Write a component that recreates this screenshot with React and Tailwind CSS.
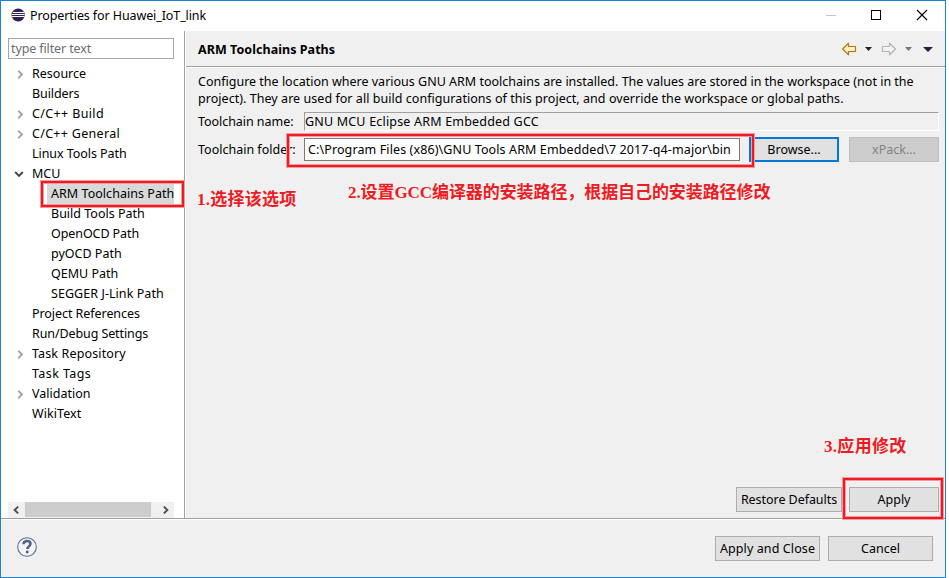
import React from 'react';

const TREE = [
  { label: 'Resource', arrow: 'right', sp: 'tracking-[0px]' },
  { label: 'Builders', sp: 'tracking-[-0.1px]' },
  { label: 'C/C++ Build', arrow: 'right', sp: 'tracking-[0.36px]' },
  { label: 'C/C++ General', arrow: 'right', sp: 'tracking-[0.3px]' },
  { label: 'Linux Tools Path', sp: 'tracking-[-0.06px]' },
  { label: 'MCU', arrow: 'down', sp: 'tracking-[0px]' },
  { label: 'ARM Toolchains Path', child: true, selected: true, sp: 'tracking-[0.04px]' },
  { label: 'Build Tools Path', child: true, sp: 'tracking-[0px]' },
  { label: 'OpenOCD Path', child: true, sp: 'tracking-[-0.08px]' },
  { label: 'pyOCD Path', child: true, sp: 'tracking-[0px]' },
  { label: 'QEMU Path', child: true, sp: 'tracking-[0px]' },
  { label: 'SEGGER J-Link Path', child: true, sp: 'tracking-[0.06px]' },
  { label: 'Project References', sp: 'tracking-[-0.06px]' },
  { label: 'Run/Debug Settings', sp: 'tracking-[-0.1px]' },
  { label: 'Task Repository', arrow: 'right', sp: 'tracking-[0.14px]' },
  { label: 'Task Tags', sp: 'tracking-[0.4px]' },
  { label: 'Validation', arrow: 'right', sp: 'tracking-[0px]' },
  { label: 'WikiText', sp: 'tracking-[0.06px]' },
];

function EclipseLogo() {
  return (
    <svg className="h-[14px] w-[14px]" viewBox="0 0 14 14">
      <circle cx="6.4" cy="7" r="6.3" fill="#f0a040" />
      <circle cx="7.3" cy="7" r="6.5" fill="#2c2255" />
      <path d="M2 4.500h11M1 6.500h12.500M1 8.500h12.500" stroke="#fff" strokeWidth="1" />
    </svg>
  );
}

function TreeArrow({ dir }) {
  if (dir === 'right') {
    return (
      <svg className="ml-[16px] h-[9px] w-[7px]" viewBox="0 0 7 9">
        <path d="M1.2 0.8L5 4.5L1.2 8.2" fill="none" stroke="#a6a6a6" strokeWidth="1.9" />
      </svg>
    );
  }
  if (dir === 'down') {
    return (
      <svg className="ml-[13px] h-[7px] w-[10px]" viewBox="0 0 10 7">
        <path d="M1.2 1L5 4.800L8.800 1" fill="none" stroke="#404040" strokeWidth="1.9" />
      </svg>
    );
  }
  return null;
}

function TreeRow({ item }) {
  if (item.child) {
    return (
      <div className="flex h-5 pl-[46px]">
        <div
          className={
            'flex h-5 w-[127px] items-center whitespace-nowrap pl-[4px] ' +
            (item.selected ? 'bg-[#d9d9d9]' : '')
          }
        >
          <span className={'pb-[2px] ' + item.sp}>{item.label}</span>
        </div>
      </div>
    );
  }
  return (
    <div className="flex h-5 items-center">
      <div className="flex w-[31px] shrink-0 items-center">
        <TreeArrow dir={item.arrow} />
      </div>
      <span className={'whitespace-nowrap pb-[2px] ' + item.sp}>{item.label}</span>
    </div>
  );
}

function Button({ className, children }) {
  return (
    <button
      className={
        'flex h-[25px] shrink-0 items-center justify-center whitespace-nowrap ' + className
      }
    >
      {children}
    </button>
  );
}

function Marker({ className }) {
  return (
    <div className={'absolute border border-[#f49a9e] ' + className}>
      <div className="h-full w-full border-2 border-[#ed1c24]">
        <div className="h-full w-full border border-[#f49a9e]" />
      </div>
    </div>
  );
}

function Note({ className, children }) {
  return (
    <div
      className={
        "absolute whitespace-nowrap font-['Liberation_Serif','Noto_Sans_CJK_SC',serif] text-[17px] leading-[20px] font-bold text-[#ed1c24] " +
        className
      }
    >
      {children}
    </div>
  );
}

export default function App() {
  return (
    <div className="h-[578px] w-[949px] overflow-hidden bg-white">
      <div className="relative flex h-[578px] w-[946px] flex-col border border-[#1883d7] bg-white font-['Noto_Sans','Open_Sans',sans-serif] text-[12.5px] leading-[17px] text-black">
        <header className="flex h-[30px] shrink-0 items-center pb-[2px] pl-[10px]">
          <EclipseLogo />
          <span className="ml-[5px] tracking-[-0.1px]">Properties for Huawei_IoT_link</span>
          <svg className="ml-auto h-[12px] w-[104px]" viewBox="0 0 104 12">
            <path d="M1 6.5h10" stroke="#c4c4c4" />
            <rect x="46.5" y="1.5" width="9" height="9" fill="none" stroke="#000" />
            <path d="M92 1l10 10M102 1L92 11" stroke="#000" strokeWidth="1.1" />
          </svg>
          <div className="w-[16px]" />
        </header>

        <div className="flex h-[487px] shrink-0">
          <aside className="flex w-[184px] shrink-0 flex-col border-r border-[#a0a0a0] bg-white">
            <div className="mt-[7px] ml-[7px] flex h-[21px] w-[166px] items-center border border-[#a5a5ad] pl-[2px] text-[#6d6d6d]">
              <span className="tracking-[-0.12px]">type filter text</span>
            </div>
            <div className="mt-[5px]">
              {TREE.map((item) => (
                <TreeRow key={item.label} item={item} />
              ))}
            </div>
            <div className="mt-auto ml-[7px] flex h-[16px] w-[166px] items-center bg-[#f0f0f0]">
              <svg className="ml-[5px] h-[8px] w-[6px]" viewBox="0 0 6 8">
                <path d="M5.2 0.6L1.6 4L5.2 7.4" fill="none" stroke="#505050" strokeWidth="1.9" />
              </svg>
              <div className="ml-[6px] h-[15px] w-[126px] self-start bg-[#cdcdcd]" />
              <svg className="ml-[12px] h-[8px] w-[6px]" viewBox="0 0 6 8">
                <path d="M0.8 0.6L4.4 4L0.8 7.4" fill="none" stroke="#505050" strokeWidth="1.9" />
              </svg>
            </div>
          </aside>

          <main className="flex min-w-0 flex-1 flex-col border-l border-white bg-[#f0f0f0]">
            <div className="flex h-[36px] shrink-0 items-center border-b border-[#a0a0a0] pl-[12px]">
              <h1 className="pt-[2px] font-bold tracking-[0.05px]">ARM Toolchains Paths</h1>
              <svg className="mt-px ml-auto h-[14px] w-[94px]" viewBox="0 0 94 14">
                <path
                  d="M1.6 7L7.500 1.200V4.500H14.500V9.500H7.500V12.800Z"
                  fill="#fff3c4"
                  stroke="#b9770e"
                  strokeWidth="1.200"
                  strokeLinejoin="round"
                />
                <path d="M24 5h7l-3.5 4z" fill="#222" />
                <path
                  d="M54.5 7L48.500 1.200V4.500H41.500V9.500H48.500V12.800Z"
                  fill="#f4f4f4"
                  stroke="#b4b4b4"
                  strokeWidth="1.200"
                  strokeLinejoin="round"
                />
                <path d="M64 5h7l-3.5 4z" fill="#777" />
                <path d="M82 5h10l-5 5z" fill="#2b1a4a" />
              </svg>
              <div className="w-[10px]" />
            </div>
            <div className="flex flex-1 flex-col border-t border-white pl-[12px]">
              <p className="mt-[5px] whitespace-nowrap">
                <span className="tracking-[0px]">
                  Configure the location where various GNU ARM toolchains are installed. The values
                  are stored in the workspace (not in the
                </span>
                <br />
                <span className="tracking-[0.045px]">
                  project). They are used for all build configurations of this project, and override
                  the workspace or global paths.
                </span>
              </p>
              <div className="mt-[5px] flex h-[19px] items-center">
                <span className="w-[106px] pb-px tracking-[-0.05px]">Toolchain name:</span>
                <div className="flex h-[19px] w-[635px] items-center border border-t-[#a0a0a0] border-r-white border-b-white border-l-[#a0a0a0]">
                  <span className="pb-px tracking-[0.19px]">GNU MCU Eclipse ARM Embedded GCC</span>
                </div>
              </div>
              <div className="mt-[6px] flex h-[25px] items-center">
                <span className="w-[106px] pb-px tracking-[0px]">Toolchain folder:</span>
                <div className="flex h-[23px] w-[436px] items-center border border-[#7a7a7a] bg-white pl-[3px]">
                  <span className="pb-px tracking-[0.11px] whitespace-nowrap">
                    C:\Program Files (x86)\GNU Tools ARM Embedded\7 2017-q4-major\bin
                  </span>
                </div>
                <Button className="ml-[9px] w-[90px] border-2 border-[#0078d7] bg-[#e1e1e1]">
                  Browse...
                </Button>
                <Button className="ml-[10px] w-[90px] border border-[#bfbfbf] bg-[#cccccc] text-[#838383]">
                  xPack...
                </Button>
              </div>
              <div className="mt-auto mr-[6px] mb-[6px] flex justify-end gap-[7px]">
                <Button className="w-[106px] border border-[#adadad] bg-[#e1e1e1] tracking-[-0.05px]">
                  Restore Defaults
                </Button>
                <Button className="w-[90px] border border-[#adadad] bg-[#e1e1e1]">Apply</Button>
              </div>
            </div>
          </main>
        </div>

        <footer className="flex flex-1 border-t border-[#a0a0a0]">
          <div className="flex flex-1 items-center border-t border-white bg-[#f0f0f0] pr-[12px] pl-[16px]">
            <svg className="mb-[3px] h-[20px] w-[20px]" viewBox="0 0 20 20">
              <circle cx="10" cy="10" r="9.3" fill="#f4f4f4" stroke="#5a6f94" strokeWidth="1.1" />
              <path
                d="M6.500 7.300C6.500 5 8 4.100 10 4.100C12 4.100 13.500 5.200 13.500 7C13.500 9.200 10.300 9.300 10.300 12"
                fill="none"
                stroke="#506387"
                strokeWidth="2.500"
              />
              <circle cx="10.200" cy="15" r="1.400" fill="#506387" />
            </svg>
            <Button className="ml-auto w-[105px] border border-[#adadad] bg-[#e1e1e1] tracking-[0.1px]">
              Apply and Close
            </Button>
            <Button className="ml-[8px] w-[105px] border border-[#adadad] bg-[#e1e1e1]">
              Cancel
            </Button>
          </div>
        </footer>

        <Marker className="top-[179px] left-[39px] h-[28px] w-[145px]" />
        <Marker className="top-[132px] left-[285px] h-[35px] w-[469px]" />
        <Marker className="top-[476px] left-[841px] h-[43px] w-[102px]" />
        <Note className="top-[189px] left-[196px] tracking-[0.25px]">1.选择该选项</Note>
        <Note className="top-[182px] left-[347px] tracking-[-0.08px]">
          2.设置GCC编译器的安装路径，根据自己的安装路径修改
        </Note>
        <Note className="top-[436px] left-[823px] tracking-[0.3px]">3.应用修改</Note>
      </div>
    </div>
  );
}
